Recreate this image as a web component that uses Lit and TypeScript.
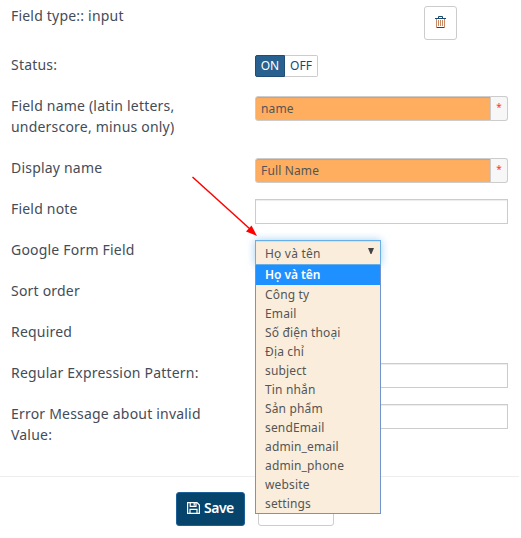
import { LitElement, html, css, nothing } from "lit";
import { customElement } from "lit/decorators.js";

const options = [
  "Họ và tên", "Công ty", "Email", "Số điện thoại", "Địa chỉ", "subject", "Tin nhắn",
  "Sản phẩm", "sendEmail", "admin_email", "admin_phone", "website", "settings",
];

@customElement("field-select")
class FieldSelect extends LitElement {
  static styles = css`
    :host { display: block; position: relative; width: 126px; height: 25px; color: #555; font-size: 12px; }
    .box { box-sizing: border-box; height: 25px; border: 1px solid #66afe9; background: #faeddc; display: flex; align-items: center; justify-content: space-between; padding: 2px 6px 0 9px; letter-spacing: .2px; box-shadow: inset 0 1px 1px rgba(0,0,0,.075), 0 0 8px rgba(102,175,233,.6); }
    .arrow { width: 6px; height: 6px; margin-bottom: 5px; }
    .list { position: absolute; z-index: 2; left: 0; top: 25px; width: 126px; height: 249px; box-sizing: border-box; border: 1px solid #7294ce; border-top: 0; background: #faeddc; }
    .option { height: 19px; line-height: 19px; padding-left: 9px; letter-spacing: .15px; white-space: nowrap; }
    .selected { background: #1e90ff; color: #fff; font-weight: 600; height: 20px; line-height: 20px; letter-spacing: -.05px; }
  `;
  render() {
    return html`
      <div class="box"><span>${options[0]}</span>
        <svg class="arrow" viewBox="0 0 6 6"><path d="M0 0H6L3.500 6H2.500Z" fill="#444"/></svg>
      </div>
      <div class="list">${options.map((o, i) => html`<div class="option ${i ? "" : "selected"}">${o}</div>`)}</div>`;
  }
}

interface Row { label: string; kind: "required" | "text" | "select" | "none" | "toggle"; value?: string; }
const rows: Row[] = [
  { label: "Status:", kind: "toggle" },
  { label: "Field name (latin letters, underscore, minus only)", kind: "required", value: "name" },
  { label: "Display name", kind: "required", value: "Full Name" },
  { label: "Field note", kind: "text" },
  { label: "Google Form Field", kind: "select" },
  { label: "Sort order", kind: "none" },
  { label: "Required", kind: "none" },
  { label: "Regular Expression Pattern:", kind: "text" },
  { label: "Error Message about invalid Value:", kind: "text" },
];

@customElement("app-root")
class AppRoot extends LitElement {
  static styles = css`
    :host { display: block; position: relative; width: 521px; height: 538px; overflow: hidden; background: #fff; color: #444c58; font: 14px/21px "Noto Sans", "Open Sans", sans-serif; }
    .form { display: flex; flex-direction: column; gap: 20px; padding: 6px 13px 0 11px; }
    .row { display: grid; grid-template-columns: 205px 253px; column-gap: 39px; align-items: start; min-height: 21px; }
    .label { margin: -1px 0 1px; letter-spacing: .2px; }
    .control { height: 21px; }
    .head { min-height: 29px; }
    .trash { box-sizing: border-box; margin-left: 169px; width: 33px; height: 34px; border: 1px solid #ccc; border-radius: 3px; display: flex; align-items: center; justify-content: center; }
    .trash svg { width: 11px; height: 12px; margin-top: -2px; }
    .toggle { display: flex; width: 63px; height: 22px; box-sizing: border-box; font-size: 12px; line-height: 20px; text-align: center; color: #114a74; }
    .on { width: 30px; box-sizing: border-box; background: #286090; border: 1px solid #204d74; color: #fff; border-radius: 2px 0 0 2px; }
    .off { width: 33px; box-sizing: border-box; border: 1px solid #ccc; border-left: 0; border-radius: 0 2px 2px 0; }
    .input { box-sizing: border-box; width: 253px; height: 25px; border: 1px solid #ccc; box-shadow: inset 0 1px 1px rgba(0,0,0,.075); }
    .group { display: flex; height: 25px; font-size: 12px; line-height: 24px; color: #555; }
    .value { flex: 1; box-sizing: border-box; border: 1px solid #ccc; border-radius: 3px 0 0 3px; background: #ffad5f; padding-left: 5px; box-shadow: inset 0 1px 1px rgba(0,0,0,.1); letter-spacing: .15px; }
    .star { width: 17px; box-sizing: border-box; border: 1px solid #ccc; border-left: 0; border-radius: 0 3px 3px 0; background: #f7f7f7; color: #f33; text-align: center; font-size: 10px; line-height: 20px; }
    .footer { border-top: 1px solid #eee; width: 519px; margin-top: 30px; padding: 15px 0 0 176px; box-sizing: border-box; display: flex; gap: 13px; }
    .save { box-sizing: border-box; width: 69px; height: 34px; border: 1px solid #1d5f98; border-radius: 3px; background: #06446c; color: #fff; display: flex; align-items: center; padding: 0 0 3px 10px; gap: 4px; font-weight: 600; font-size: 14px; letter-spacing: -.5px; }
    .save svg { width: 13px; height: 12px; }
    .other { box-sizing: border-box; width: 76px; height: 34px; border: 1px solid #ccc; border-radius: 3px; }
    .pointer { position: absolute; left: 190px; top: 174px; width: 70px; height: 64px; }
  `;
  control(row: Row) {
    switch (row.kind) {
      case "toggle": return html`<div class="toggle"><span class="on">ON</span><span class="off">OFF</span></div>`;
      case "required": return html`<div class="group"><span class="value">${row.value}</span><span class="star">*</span></div>`;
      case "text": return html`<div class="input"></div>`;
      case "select": return html`<field-select></field-select>`;
      default: return nothing;
    }
  }
  render() {
    return html`
      <div class="form">
        <div class="row head"><div class="label">Field type:: input</div>
          <div class="control"><div class="trash">
            <svg viewBox="0 0 11 12" fill="none"><path d="M1.500 3V11M9.500 3V11M3.500 4V10M5.500 4V10M7.500 4V10" stroke="#c98a68"/><path d="M0 2.500H11M3.500 2V.5H7.500V2M1.500 11.500H9.500" stroke="#164a70"/></svg>
          </div></div>
        </div>
        ${rows.map((r) => html`<div class="row"><div class="label">${r.label}</div><div class="control">${this.control(r)}</div></div>`)}
      </div>
      <div class="footer">
        <div class="save"><svg viewBox="0 0 13 12" fill="none" stroke="#fff" stroke-width="1.2"><path d="M.6 .6H10L12.4 3V11.4H.6ZM3.2 .6V4.300H9V.6M3 11.4V7.300H10V11.4M7.200 1V3.500"/></svg>Save</div>
        <div class="other"></div>
      </div>
      <svg class="pointer" viewBox="190 174 70 64"><path d="M192.500 177L250 229" stroke="#f00" stroke-width="1.500"/><path d="M257 236L246 231.500L251.500 225.500Z" fill="#f00"/></svg>`;
  }
}
